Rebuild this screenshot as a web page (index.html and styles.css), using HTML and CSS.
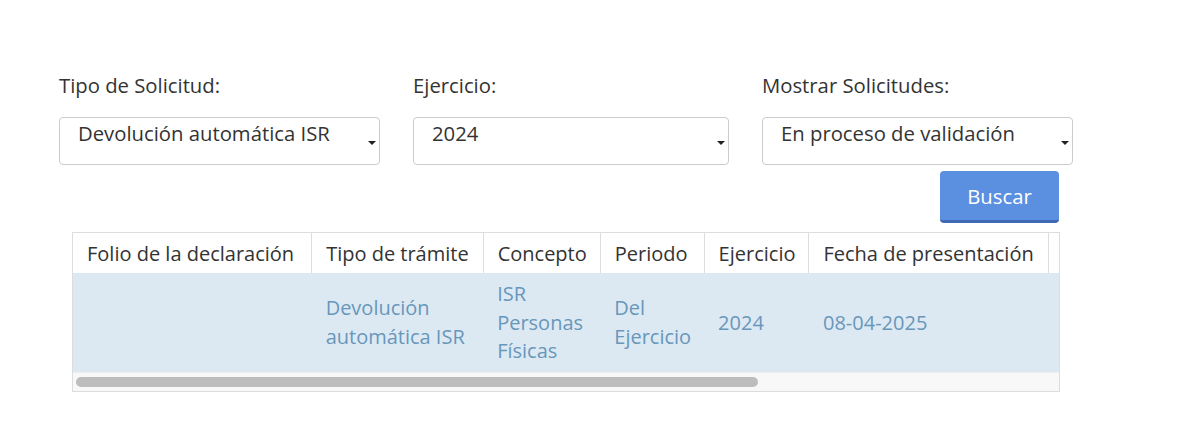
FILE: index.html
```html
<!DOCTYPE html>
<html lang="es">
<head>
<meta charset="utf-8">
<title>Solicitudes</title>
<link rel="stylesheet" href="styles.css">
</head>
<body>
<main class="page">
  <section class="filters">
    <div class="field">
      <label class="label">Tipo de Solicitud:</label>
      <div class="control"><span>Devolución automática ISR</span><i class="caret"></i></div>
    </div>
    <div class="field">
      <label class="label">Ejercicio:</label>
      <div class="control"><span>2024</span><i class="caret"></i></div>
    </div>
    <div class="field">
      <label class="label">Mostrar Solicitudes:</label>
      <div class="control"><span>En proceso de validación</span><i class="caret"></i></div>
    </div>
  </section>
  <div class="actions">
    <button class="btn">Buscar</button>
  </div>
  <div class="table-box">
    <div class="table-wrap">
      <table class="grid">
        <thead>
          <tr>
            <th>Folio de la declaración</th>
            <th>Tipo de trámite</th>
            <th>Concepto</th>
            <th>Periodo</th>
            <th>Ejercicio</th>
            <th>Fecha de presentación</th>
            <th class="extra"></th>
          </tr>
        </thead>
        <tbody>
          <tr>
            <td></td>
            <td>Devolución automática ISR</td>
            <td>ISR Personas Físicas</td>
            <td>Del Ejercicio</td>
            <td>2024</td>
            <td>08-04-2025</td>
            <td></td>
          </tr>
        </tbody>
      </table>
    </div>
    <div class="scrollbar"><div class="thumb"></div></div>
  </div>
</main>
</body>
</html>
```
FILE: styles.css
```css
* { box-sizing: border-box; }
html, body { margin: 0; padding: 0; background: #fff; }
body {
  font-family: "Open Sans", "Noto Sans", "DejaVu Sans", sans-serif;
  font-size: 20px;
  line-height: 1.42857;
  color: #333;
}
.page {
  width: 1200px;
  height: 448px;
  padding: 71px 0 0 59px;
  overflow: hidden;
}
.filters {
  display: grid;
  grid-template-columns: 321px 316px 311px;
  column-gap: 33px;
  font-size: 20.3px;
}
.field { display: flex; flex-direction: column; }
.label {
  display: block;
  height: 28px;
  margin-bottom: 18px;
  color: #333;
  white-space: nowrap;
}
.control {
  position: relative;
  height: 48px;
  border: 1px solid #ccc;
  border-radius: 4px;
  padding: 1px 30px 0 18px;
  color: #333;
  white-space: nowrap;
}
.caret {
  position: absolute;
  right: 3px;
  top: 23px;
  width: 0;
  height: 0;
  border-left: 4px solid transparent;
  border-right: 4px solid transparent;
  border-top: 4px solid #222;
}
.actions {
  display: flex;
  justify-content: flex-end;
  width: 1000px;
  margin-top: 6px;
}
.btn {
  width: 119px;
  height: 52px;
  border: none;
  border-bottom: 3px solid #3f69b3;
  border-radius: 4px;
  background: #5b8fe0;
  color: #fff;
  font: inherit;
  font-size: 20.3px;
  padding: 2px 0 0;
}
.table-box {
  width: 988px;
  margin: 9px 0 0 13px;
  border: 1px solid #ddd;
}
.table-wrap {
  overflow: hidden;
}
.grid {
  border-collapse: collapse;
  width: 1px;
}
.grid th {
  white-space: nowrap;
  font-weight: normal;
  text-align: left;
  padding: 7px 14px 4px;
  height: 40px;
  color: #333;
  border-right: 1px solid #ddd;
  background: #fff;
}
.grid td {
  padding: 7px 14px 6px;
  vertical-align: middle;
  background: #dce9f3;
  color: #6897ba;
}
.grid th:nth-child(1), .grid td:nth-child(1) { padding-right: 17px; }
.grid th:nth-child(3), .grid td:nth-child(3),
.grid th:nth-child(4), .grid td:nth-child(4),
.grid th:nth-child(5), .grid td:nth-child(5) { padding-right: 13px; }
.grid th.extra { min-width: 80px; width: 80px; }
.scrollbar {
  height: 19px;
  background: #f8f8f8;
  padding: 4px 3px 5px;
  border-top: 1px solid #eee;
}
.thumb {
  width: 682px;
  height: 10px;
  border-radius: 5px;
  background: #bdbdbd;
}
```
